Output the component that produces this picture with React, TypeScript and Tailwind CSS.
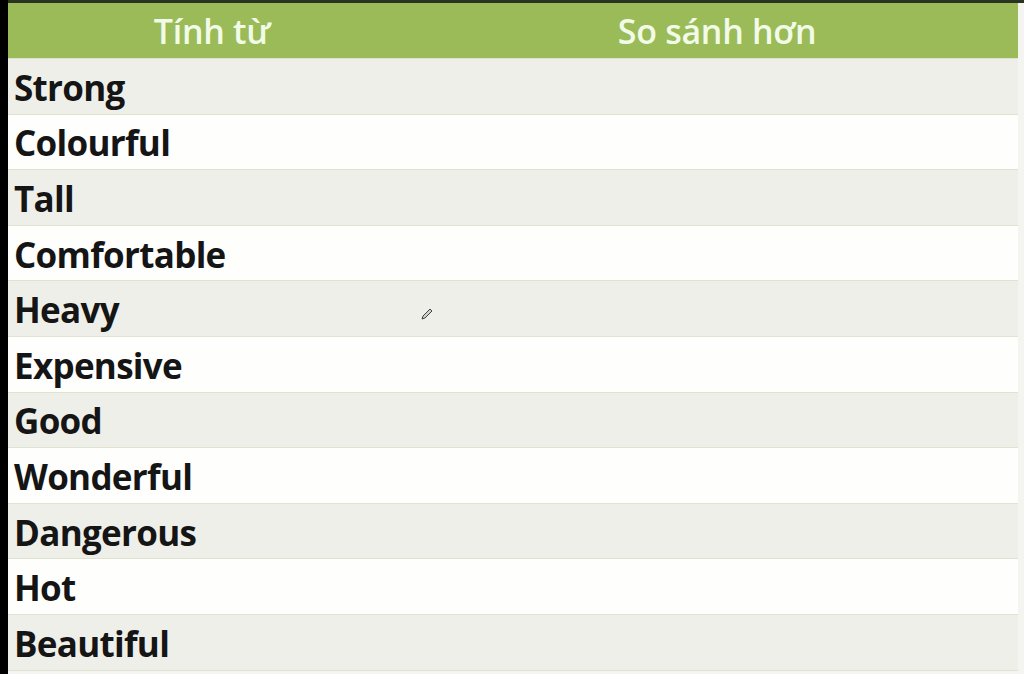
import React from "react";

const words = ["Strong","Colourful","Tall","Comfortable","Heavy","Expensive","Good","Wonderful","Dangerous","Hot","Beautiful"];

export default function App() {
  return (
    <div className="w-[1024px] h-[674px] bg-[#f4f4f0] flex overflow-hidden" style={{ fontFamily: "'Open Sans', sans-serif" }}>
      <div className="w-[8px] h-full bg-black" />
      <div className="flex-1 flex flex-col">
        <div className="h-[3px] bg-[#2a3322]" />
        <div className="w-[1010px] flex flex-col">
          <div className="h-[55px] bg-[#9bbb59] flex items-center text-[#f2fbe8] text-[34px] font-semibold leading-none tracking-[-0.3px]">
            <div className="w-[408px] text-center">Tính từ</div>
            <div className="flex-1 text-center">So sánh hơn</div>
          </div>
          {words.map((w, i) => (
            <div key={w} className={`relative h-[55.6px] flex items-center border-t border-[#dfe3d0] ${i % 2 === 0 ? "bg-[#efefe9]" : "bg-[#fefefc]"}`}>
              <div className="pl-[6px] pt-[2px] text-[35px] leading-none font-bold text-[#151515] tracking-[-0.7px]">{w}</div>
              {w === "Heavy" && (
                <svg className="absolute left-[412px] top-[26px]" width="14" height="14" viewBox="0 0 14 14">
                  <path d="M2 12 L3 9 L10 2 L12 4 L5 11 Z" fill="#cfcfcf" stroke="#444" strokeWidth="1" />
                </svg>
              )}
            </div>
          ))}
          <div className="border-t border-[#dfe3d0]" />
        </div>
      </div>
    </div>
  );
}
